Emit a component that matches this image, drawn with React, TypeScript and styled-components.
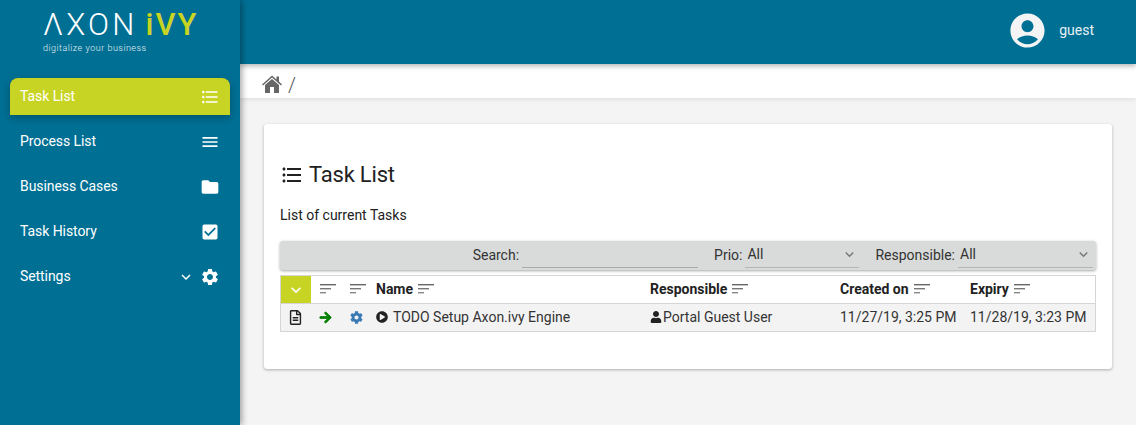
import React from "react";
import styled, { createGlobalStyle } from "styled-components";
import { FaUser, FaArrowRight, FaCog, FaPlayCircle, FaRegFileAlt } from "react-icons/fa";
import { MdFormatListBulleted, MdMenu, MdFolder, MdCheckBox, MdSettings, MdAccountCircle, MdExpandMore } from "react-icons/md";

const Global = createGlobalStyle`
  html, body { margin: 0; padding: 0; height: 100%; overflow: hidden; }
  body { font-family: Roboto, "Liberation Sans", sans-serif; font-size: 14px; color: #212121; background: #f4f4f4; }
`;
const Page = styled.div`
  display: grid; grid-template-columns: 240px 1fr; height: 425px; overflow: hidden;
`;
const Sidebar = styled.aside`
  background: #006f94; box-shadow: 2px 0 6px rgba(0,0,0,.35); position: relative; z-index: 3;
  display: flex; flex-direction: column;
`;
const LogoBox = styled.div`
  height: 78px; padding: 7px 0 0 43px; box-sizing: border-box; color: #fff;
`;
const LogoMark = styled.div`
  font-size: 31px; font-weight: 300; line-height: 36px; letter-spacing: 3.2px; white-space: nowrap;
`;
const LogoAccent = styled.span`
  color: #c8d424; font-weight: 500; margin-left: 8px; letter-spacing: 2px;
`;
const Tagline = styled.div`
  font-size: 9px; font-weight: 300; line-height: 11px; letter-spacing: 0.5px; color: #e4eff3; white-space: nowrap;
`;
const Nav = styled.nav`
  display: flex; flex-direction: column; gap: 8px; padding: 0 10px;
`;
const NavItem = styled.div<{ $active?: boolean }>`
  height: 37px; display: flex; align-items: center; padding: 0 10px; color: #fff; font-size: 14px;
  letter-spacing: -0.07px;
  border-radius: ${p => (p.$active ? "8px 8px 0 0" : "0")};
  background: ${p => (p.$active ? "#c8d424" : "transparent")};
  box-shadow: ${p => (p.$active ? "0 3px 8px rgba(0,0,0,.25)" : "none")};
  svg { display: block; }
`;
const NavLabel = styled.span`
  flex: 1; margin-bottom: 2px;
`;
const NavIcon = styled.span`
  width: 20px; height: 20px; display: flex; align-items: center; justify-content: center; font-size: 20px;
`;
const Caret = styled.span`
  font-size: 18px; display: flex; margin-right: 5px;
`;
const Main = styled.main`
  display: flex; flex-direction: column; min-width: 0;
`;
const Topbar = styled.header`
  height: 64px; background: #006f94; flex: none; display: flex; align-items: center; justify-content: flex-end;
  padding: 0 42px 4px 0; box-sizing: border-box; color: #e8f1f4; box-shadow: 0 2px 5px rgba(0,0,0,.3); position: relative; z-index: 2;
`;
const Avatar = styled.span`
  font-size: 41px; display: flex; color: #f4f4f4; margin-right: 11px;
  svg { display: block; }
`;
const Crumb = styled.div`
  height: 34px; background: #fff; flex: none; display: flex; align-items: center; padding: 6px 0 0 22px; box-sizing: border-box; gap: 6px;
  color: #666; box-shadow: 0 1px 5px rgba(0,0,0,.1); position: relative; z-index: 1;
  svg { display: block; }
`;
const Slash = styled.span`
  font-size: 20px; font-weight: 300; color: #555; line-height: 20px; margin-top: 2px;
`;
const Content = styled.div`
  padding: 26px 24px 0;
`;
const Card = styled.section`
  background: #fff; height: 245px; box-sizing: border-box; border-radius: 3px; padding: 33px 16px 0;
  box-shadow: 0 1px 3px rgba(0,0,0,.3);
`;
const Title = styled.h1`
  margin: 0; font-size: 22px; font-weight: 400; letter-spacing: -0.2px; line-height: 36px; display: flex; align-items: center; gap: 5px; color: #212121;
  svg { display: block; }
`;
const Para = styled.p`
  margin: 14px 0 0; line-height: 16px; font-size: 14px;
`;
const Toolbar = styled.div`
  margin-top: 18px; height: 29px; background: #d9dbda; border-radius: 3px; box-shadow: 0 1px 3px rgba(0,0,0,.35);
  display: flex; align-items: center; justify-content: flex-end; box-sizing: border-box; color: #333;
`;
const Label = styled.label`
  margin: 0 3px 2px 0;
`;
const SearchBox = styled.span`
  display: block; width: 176px; height: 24px; border-bottom: 1px solid #aaa; margin-right: 16px;
`;
const Select = styled.span<{ $w: number; $mr: number }>`
  width: ${p => p.$w}px; height: 25px; margin-right: ${p => p.$mr}px; box-sizing: border-box; border-bottom: 1px solid #b5b5b5;
  display: flex; align-items: center; justify-content: space-between; padding: 0 1px 3px 2px; color: #333;
  svg { color: #777; font-size: 17px; display: block; margin-top: 2px; }
`;
const Table = styled.table`
  margin-top: 5px; width: 816px; border-collapse: collapse; table-layout: fixed; font-size: 14px;
  border: 1px solid #d5d5d5; box-sizing: border-box;
`;
const Th = styled.th`
  height: 27px; padding: 0 5px 2px 4.5px; box-sizing: border-box; text-align: left; font-weight: 700; font-size: 14px; background: #fff;
  border-bottom: 1px solid #d5d5d5; white-space: nowrap; color: #222;
`;
const ToggleTh = styled.th`
  height: 27px; background: #c8d424; padding: 0; border-bottom: 1px solid #d5d5d5; color: #fff;
  svg { display: block; margin: 0 auto; font-size: 20px; }
`;
const Td = styled.td`
  height: 28px; padding: 0 5px 2px 4.5px; box-sizing: border-box; background: #f3f3f3; white-space: nowrap; color: #333;
`;
const IconTd = styled(Td)<{ $color: string; $size: number }>`
  padding: 0 0 1px; color: ${p => p.$color};
  svg { display: block; margin: 0 auto; font-size: ${p => p.$size}px; }
`;
const ArrowTd = styled(IconTd)`
  svg { stroke: currentColor; stroke-width: 30px; }
`;
const InlineIcon = styled.span<{ $size: number; $gap: number }>`
  font-size: ${p => p.$size}px; color: #222; margin-right: ${p => p.$gap}px; vertical-align: -1px; display: inline-block;
  svg { display: block; }
`;
const SortWrap = styled.svg`
  display: inline-block; vertical-align: 0; margin-left: 5px;
`;
const Sort = () => (
  <SortWrap width="16" height="10" viewBox="0 0 16 10">
    <rect x="0" y="0" width="16" height="1.4" fill="#666" />
    <rect x="0" y="4" width="11" height="1.4" fill="#777" />
    <rect x="0" y="8" width="6" height="1.4" fill="#888" />
  </SortWrap>
);
const HomeIcon = () => (
  <svg width="20" height="18" viewBox="0 0 20 18" fill="#666">
    <path d="M10 0.5 L14.5 4.4 V1.5 H17 V6.6 L20 9.4 L19 10.4 L10 2.6 L1 10.4 L0 9.4 Z" />
    <path d="M3 10 L10 4 L17 10 V18 H12 V12 H8 V18 H3 Z" />
  </svg>
);

export default function App() {
  return (
    <Page>
      <Global />
      <Sidebar>
        <LogoBox>
          <LogoMark>ΛXON<LogoAccent>iVY</LogoAccent></LogoMark>
          <Tagline>digitalize your business</Tagline>
        </LogoBox>
        <Nav>
          <NavItem $active><NavLabel>Task List</NavLabel><NavIcon><MdFormatListBulleted /></NavIcon></NavItem>
          <NavItem><NavLabel>Process List</NavLabel><NavIcon><MdMenu /></NavIcon></NavItem>
          <NavItem><NavLabel>Business Cases</NavLabel><NavIcon><MdFolder /></NavIcon></NavItem>
          <NavItem><NavLabel>Task History</NavLabel><NavIcon><MdCheckBox /></NavIcon></NavItem>
          <NavItem><NavLabel>Settings</NavLabel><Caret><MdExpandMore /></Caret><NavIcon><MdSettings /></NavIcon></NavItem>
        </Nav>
      </Sidebar>
      <Main>
        <Topbar>
          <Avatar><MdAccountCircle /></Avatar>
          <span>guest</span>
        </Topbar>
        <Crumb><HomeIcon /><Slash>/</Slash></Crumb>
        <Content>
          <Card>
            <Title><MdFormatListBulleted size={24} />Task List</Title>
            <Para>List of current Tasks</Para>
            <Toolbar>
              <Label>Search:</Label><SearchBox />
              <Label>Prio:</Label>
              <Select $w={114} $mr={16}>All<MdExpandMore /></Select>
              <Label>Responsible:</Label>
              <Select $w={135} $mr={3}>All<MdExpandMore /></Select>
            </Toolbar>
            <Table>
              <colgroup>
                <col width="30" /><col width="30" /><col width="31" /><col width="274" />
                <col width="190" /><col width="130" /><col />
              </colgroup>
              <thead>
                <tr>
                  <ToggleTh><MdExpandMore /></ToggleTh>
                  <Th><Sort /></Th>
                  <Th><Sort /></Th>
                  <Th>Name<Sort /></Th>
                  <Th>Responsible<Sort /></Th>
                  <Th>Created on<Sort /></Th>
                  <Th>Expiry<Sort /></Th>
                </tr>
              </thead>
              <tbody>
                <tr>
                  <IconTd $color="#222" $size={15}><FaRegFileAlt /></IconTd>
                  <ArrowTd $color="#008000" $size={13}><FaArrowRight /></ArrowTd>
                  <IconTd $color="#3a7ab5" $size={13}><FaCog /></IconTd>
                  <Td><InlineIcon $size={12} $gap={5}><FaPlayCircle /></InlineIcon>TODO Setup Axon.ivy Engine</Td>
                  <Td><InlineIcon $size={12} $gap={1}><FaUser /></InlineIcon>Portal Guest User</Td>
                  <Td>11/27/19, 3:25 PM</Td>
                  <Td>11/28/19, 3:23 PM</Td>
                </tr>
              </tbody>
            </Table>
          </Card>
        </Content>
      </Main>
    </Page>
  );
}
